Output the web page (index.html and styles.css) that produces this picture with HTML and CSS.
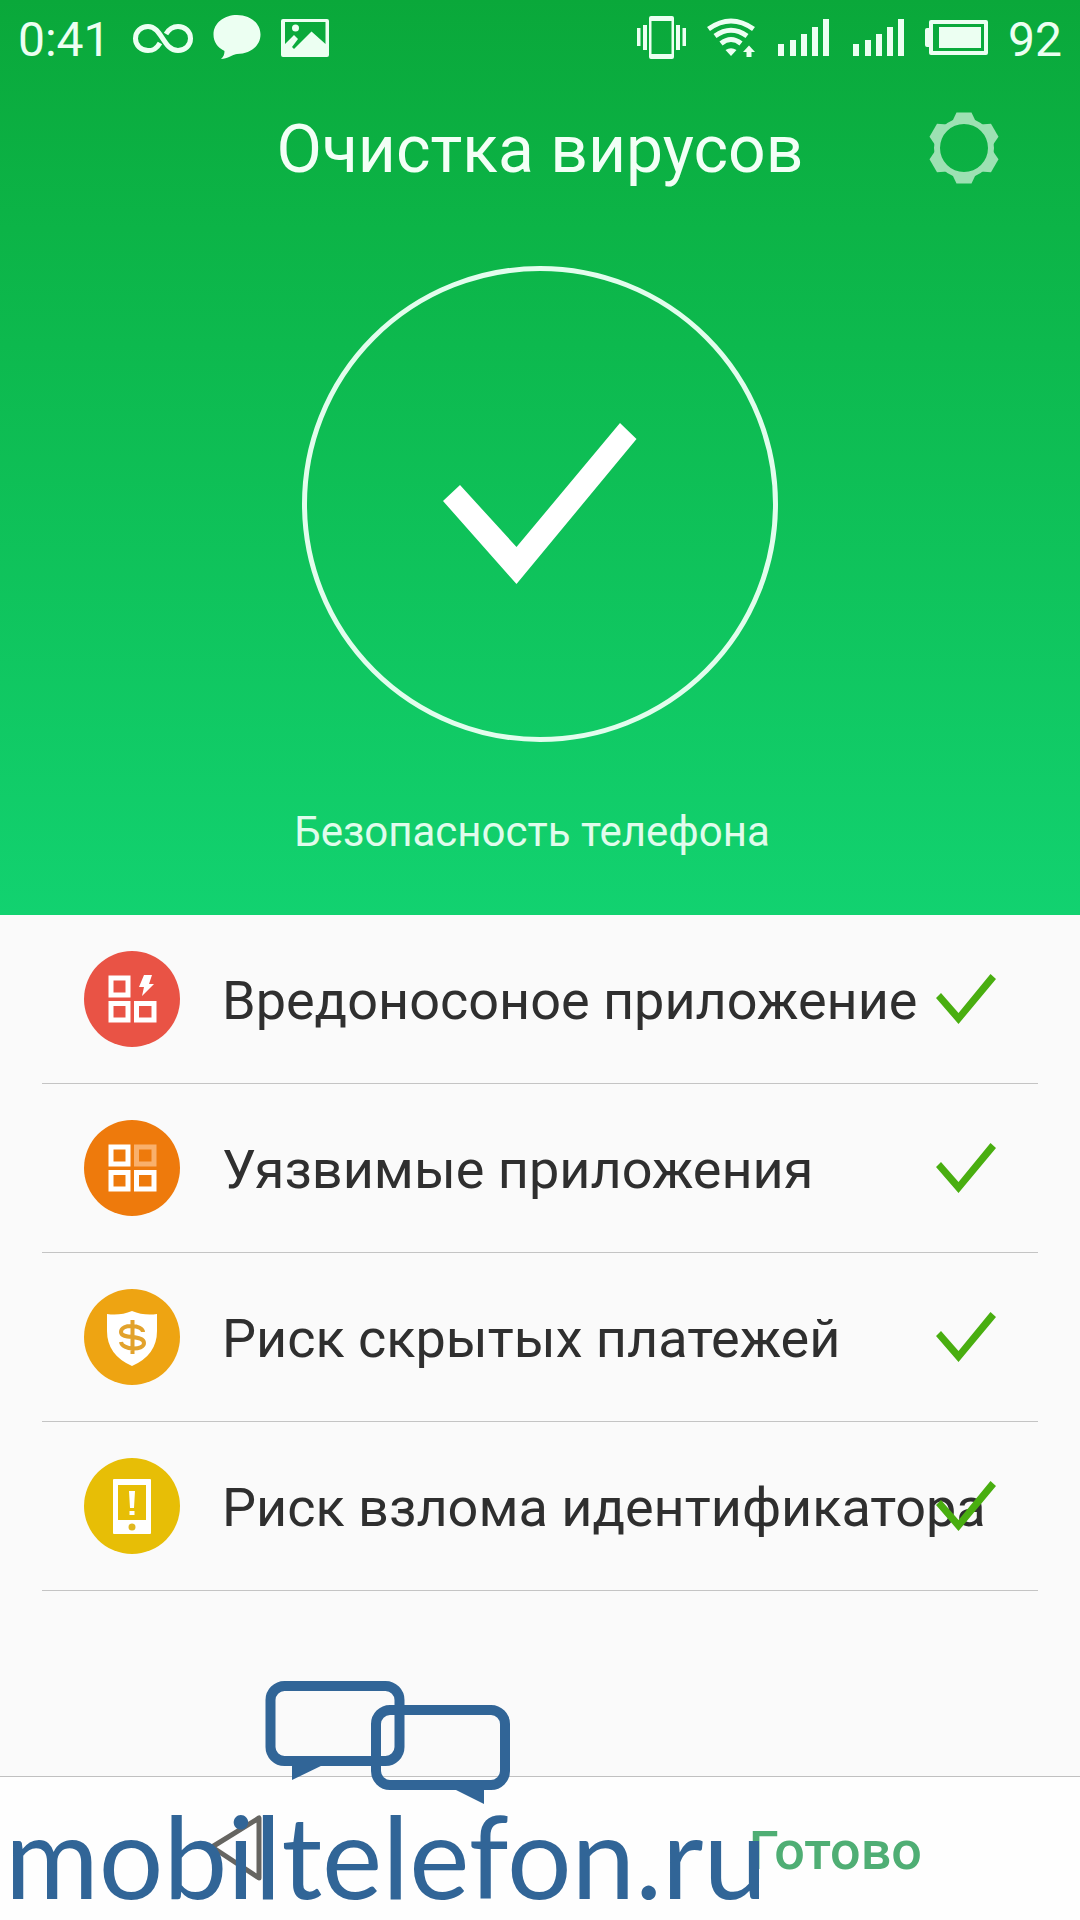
FILE: index.html
```html
<!DOCTYPE html>
<html lang="ru">
<head>
<meta charset="utf-8">
<meta name="viewport" content="width=device-width, initial-scale=1">
<title>Очистка вирусов</title>
<link rel="stylesheet" href="styles.css">
</head>
<body>
<div class="screen">
  <header class="hero">
    <div class="status">
      <span class="status-text">0:41</span>
      <svg class="icon-infinity" width="60" height="44" viewBox="0 0 60 44" fill="none" stroke="currentColor" stroke-width="5"><path d="M27 27C23 34 19 34.500 15 34.500C8 34.500 2.500 29.500 2.500 22.500S8 10.500 15 10.500C29 10.500 30 34.500 45 34.500C52 34.500 57.500 29.500 57.500 22.500S52 10.500 45 10.500C40 10.500 36 13 33 18"/></svg>
      <svg class="icon-chat" width="48" height="48" viewBox="0 0 48 48" fill="currentColor"><path d="M24 1C37 1 47.500 9 47.500 20.500S37 40 24 40C21 40 14 45 8 45C10.500 43 11.500 40 11.500 37C4.500 33.500.5 28 .5 20.500C.5 9 11 1 24 1Z"/></svg>
      <svg class="icon-photo" width="48" height="40" viewBox="0 0 48 40" fill="currentColor"><path fill-rule="evenodd" d="M2 1H46Q48 1 48 3V37Q48 39 46 39H2Q0 39 0 37V3Q0 1 2 1ZM4 4V26L13 17L17 21L11 29L13 31L30.500 13.500L44.500 26V4Z"/><circle cx="14.500" cy="10" r="3.500"/></svg>
      <span class="status-space"></span>
      <svg width="50" height="44" viewBox="0 0 50 44" fill="currentColor"><path fill-rule="evenodd" d="M14 0H35Q37 0 37 2V41Q37 43 35 43H14Q12 43 12 41V2Q12 0 14 0ZM14.500 5V38H34.500V5Z"/><path d="M0 12H3.500V30H0ZM6 9H10V34H6ZM39 9H43V34H39ZM45.500 12H49V30H45.500Z"/></svg>
      <svg class="icon-wifi" width="48" height="40" viewBox="0 0 48 40" fill="none" stroke="currentColor" stroke-width="5"><path d="M1.500 11Q24-5 46.500 11M8 18Q24 6.500 40 18M14 25.500Q24 17.500 34 25.500"/><path d="M18.500 32Q24 28.500 29.500 32L24 38ZM42 27.500L48 34H44.500V39H39.500V34H36Z" fill="currentColor" stroke="none"/></svg>
      <svg class="icon-signal" width="52" height="40" viewBox="0 0 52 40" fill="currentColor"><path d="M0 26H6V38H0ZM12 22H18V38H12ZM23 16H29V38H23ZM34 9H40V38H34ZM45 1H51V38H45Z"/></svg>
      <svg class="icon-signal" width="52" height="40" viewBox="0 0 52 40" fill="currentColor"><path d="M0 26H6V38H0ZM12 22H18V38H12ZM23 16H29V38H23ZM34 9H40V38H34ZM45 1H51V38H45Z"/></svg>
      <svg class="icon-battery" width="63" height="36" viewBox="0 0 63 36" fill="currentColor"><path fill-rule="evenodd" d="M6 0H61Q63 0 63 2V33Q63 35 61 35H6Q4 35 4 33V27H2Q0 27 0 25V10Q0 8 2 8H4V2Q4 0 6 0ZM8 4V31H59V4Z"/><path d="M14 7H56V28H14Z"/></svg>
      <span class="status-text">92</span>
    </div>
    <div class="titlebar">
      <h1 class="title">Очистка вирусов</h1>
      <button class="settings" type="button" aria-label="Настройки">
        <svg width="72" height="72" viewBox="-36 -36 72 72"><defs><path id="tooth" d="M-12-26L-7.500-35.500H7.500L12-26Z"/></defs><g fill="#9de1b3"><path fill-rule="evenodd" d="M-30 0A30 30 0 1 1 30 0A30 30 0 1 1-30 0ZM-24 0A24 24 0 1 0 24 0A24 24 0 1 0-24 0Z"/><use href="#tooth"/><use href="#tooth" transform="rotate(60)"/><use href="#tooth" transform="rotate(120)"/><use href="#tooth" transform="rotate(180)"/><use href="#tooth" transform="rotate(240)"/><use href="#tooth" transform="rotate(300)"/></g></svg>
      </button>
    </div>
    <svg class="result" width="476" height="476" viewBox="0 0 476 476"><circle cx="238" cy="238" r="235.500" fill="none" stroke="#e2fded" stroke-width="5"/><path fill="#fff" d="M141 235L158 219L214.500 281L318 157L334.500 173L214.500 318Z"/></svg>
    <p class="subtitle">Безопасность телефона</p>
  </header>

  <main class="main">
    <ul class="checks">
      <li class="check-row">
        <svg class="badge" viewBox="0 0 96 96"><circle cx="48" cy="48" r="48" fill="#e95345"/><path fill="none" stroke="#fff" stroke-width="5" d="M27 27H44V44H27ZM27 52.500H44V69H27ZM52.500 52.500H70V69H52.500Z"/><path fill="#fff" d="M60 24H68L65 33H70L58 45L60 36H55Z"/></svg>
        <span class="label">Вредоносоное приложение</span>
        <svg class="tick" viewBox="0 0 60 50"><path d="M0 24L5 19L22.500 39L54.500 0L60 5L22.500 50Z"/></svg>
      </li>
      <li class="check-row">
        <svg class="badge" viewBox="0 0 96 96"><circle cx="48" cy="48" r="48" fill="#ee7a0c"/><path fill="none" stroke="#fff" stroke-width="5" d="M27 27H44V44H27ZM27 52.500H44V69H27ZM52.500 52.500H70V69H52.500Z"/><path fill="none" stroke="#f9b06c" stroke-width="5" d="M52.500 27H70V44H52.500Z"/></svg>
        <span class="label">Уязвимые приложения</span>
        <svg class="tick" viewBox="0 0 60 50"><path d="M0 24L5 19L22.500 39L54.500 0L60 5L22.500 50Z"/></svg>
      </li>
      <li class="check-row">
        <svg class="badge" viewBox="0 0 96 96"><circle cx="48" cy="48" r="48" fill="#eea412"/><path fill="#fff" d="M23 25Q36 27 48 22Q60 27 73 25V42Q73 66 48 77Q23 66 23 42Z"/><path fill="none" stroke="#e2a22c" stroke-width="4" d="M59 43C59 36 37 34 37 43C37 51 60 45 60 54C60 62 38 61 37 53M48.500 31V65"/></svg>
        <span class="label">Риск скрытых платежей</span>
        <svg class="tick" viewBox="0 0 60 50"><path d="M0 24L5 19L22.500 39L54.500 0L60 5L22.500 50Z"/></svg>
      </li>
      <li class="check-row">
        <svg class="badge" viewBox="0 0 96 96"><circle cx="48" cy="48" r="48" fill="#e7be06"/><path fill="#fff" fill-rule="evenodd" d="M30 21H66Q67 21 67 22V75Q67 76 66 76H30Q29 76 29 75V22Q29 21 30 21ZM34 27V62H62V27Z"/><circle cx="48" cy="69" r="3.500" fill="#e0b820"/><path fill="#fff" d="M45 33H51L50 50H46ZM45.500 53H50.500V57H45.500Z"/></svg>
        <span class="label">Риск взлома идентификатора</span>
        <svg class="tick" viewBox="0 0 60 50"><path d="M0 24L5 19L22.500 39L54.500 0L60 5L22.500 50Z"/></svg>
      </li>
    </ul>
  </main>

  <footer class="navbar">
    <button class="back" type="button" aria-label="Назад">
      <svg width="56" height="72" viewBox="0 0 56 72" fill="none" stroke="#666561" stroke-width="5" stroke-linejoin="round"><path d="M51 5V65L4 34Z"/></svg>
    </button>
    <button class="done" type="button">Готово</button>
  </footer>

  <div class="watermark">
    <svg class="watermark-logo" width="246" height="124" viewBox="0 0 246 124"><g fill="none" stroke="#316597" stroke-width="10"><rect x="5.500" y="6" width="129" height="75" rx="14"/><rect x="111" y="30" width="129" height="75" rx="14"/></g><path fill="#316597" d="M27 84H60L27 100ZM187 108H219V124Z"/></svg>
    <span class="watermark-text">mobiltelefon.ru</span>
  </div>
</div>
</body>
</html>
```
FILE: styles.css
```css
* {
  box-sizing: border-box;
}

body {
  margin: 0;
  font-family: Roboto, "Liberation Sans", sans-serif;
  background: #fafafa;
  color: #2f2f2f;
}

button {
  padding: 0;
  border: 0;
  background: none;
  font-family: inherit;
}

svg {
  display: block;
  flex: none;
}

.screen {
  position: relative;
  display: flex;
  flex-direction: column;
  min-height: 100vh;
  overflow: hidden;
}

.hero {
  display: flex;
  flex-direction: column;
  background: linear-gradient(#0aa83a, #0cb447 25%, #12d270);
  color: #fff;
}

.status {
  display: flex;
  align-items: center;
  height: 76px;
  padding: 0 18px;
  color: #ecfff2;
}

.status-text {
  padding-top: 4px;
  font-size: 48px;
  line-height: 72px;
}

.status-space {
  flex: 1;
}

.icon-infinity {
  margin-left: 22px;
}

.icon-chat {
  margin-left: 20px;
}

.icon-photo {
  margin-left: 20px;
}

.icon-wifi {
  margin-left: 20px;
}

.icon-signal {
  margin-left: 23px;
}

.icon-battery {
  margin: 0 20px;
}

.titlebar {
  display: grid;
  grid-template-columns: 1fr auto 1fr;
  align-items: center;
  height: 144px;
  padding: 0 80px;
}

.title {
  grid-column: 2;
  margin: 0;
  padding-top: 4px;
  font-size: 66px;
  font-weight: 400;
  line-height: 80px;
  color: #f2fff6;
}

.settings {
  justify-self: end;
}

.result {
  align-self: center;
  margin-top: 46px;
}

.subtitle {
  margin: 60px 0 53px;
  padding-right: 16px;
  font-size: 42px;
  line-height: 60px;
  text-align: center;
  color: #e0fcec;
}

.main {
  flex: 1;
}

.checks {
  margin: 0 42px;
  padding: 0;
  list-style: none;
}

.check-row {
  display: flex;
  align-items: center;
  gap: 42px;
  height: 169px;
  padding: 0 42px;
  border-bottom: 1px solid #c4c4c4;
}

.badge {
  width: 96px;
  height: 96px;
}

.label {
  flex: 1;
  min-width: 0;
  padding-top: 4px;
  font-size: 54px;
  line-height: 64px;
  white-space: nowrap;
}

.tick {
  position: relative;
  width: 60px;
  height: 50px;
  margin-left: -42px;
  fill: #49ae10;
}

.navbar {
  display: flex;
  align-items: center;
  justify-content: space-between;
  height: 144px;
  padding: 0 158px 0 208px;
  border-top: 1px solid #c0c0c0;
  background: #fefefe;
}

.done {
  padding-top: 4px;
  font-size: 54px;
  font-weight: 500;
  line-height: 64px;
  color: #4fae74;
}

.watermark {
  position: absolute;
  left: 5px;
  bottom: 14px;
  color: #316597;
  pointer-events: none;
}

.watermark-logo {
  margin-left: 260px;
}

.watermark-text {
  display: block;
  font-family: Lato, sans-serif;
  font-size: 114px;
  line-height: 102px;
}
```
